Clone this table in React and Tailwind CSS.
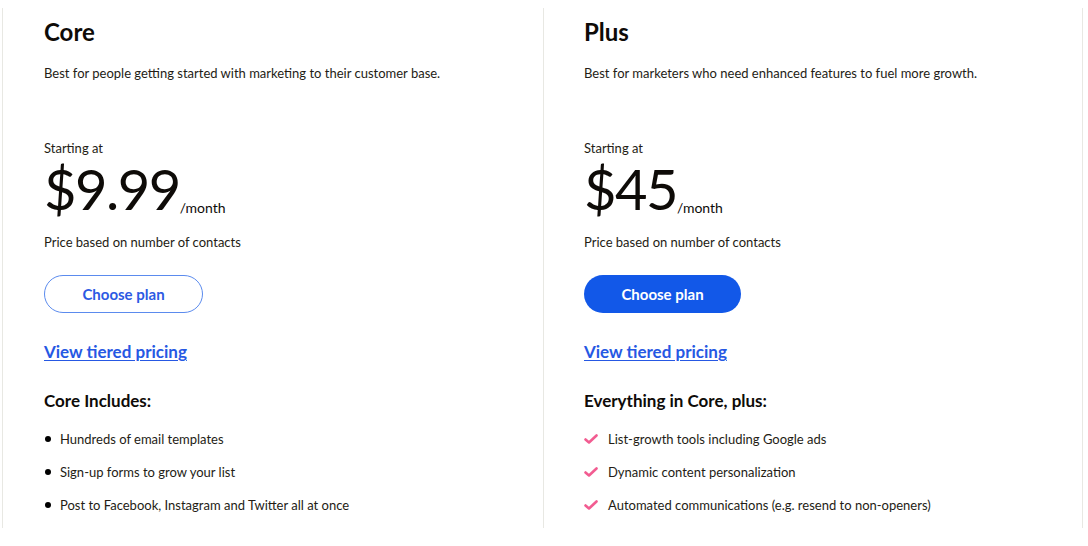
import React from 'react';

const font = { fontFamily: 'Lato, "Open Sans", sans-serif' };

const Check = () => (
    <svg width="14" height="11" viewBox="0 0 14 11" className="shrink-0">
        <polyline points="1.5,5.5 5,8.5 12.5,1.5" fill="none" stroke="#f25c91" strokeWidth="2.6" strokeLinecap="round" strokeLinejoin="round" />
    </svg>
);

const plans = [
    {
        name: 'Core',
        blurb: 'Best for people getting started with marketing to their customer base.',
        price: '$9.99',
        filled: false,
        heading: 'Core Includes:',
        check: false,
        items: [
            'Hundreds of email templates',
            'Sign-up forms to grow your list',
            'Post to Facebook, Instagram and Twitter all at once',
        ],
    },
    {
        name: 'Plus',
        blurb: 'Best for marketers who need enhanced features to fuel more growth.',
        price: '$45',
        filled: true,
        heading: 'Everything in Core, plus:',
        check: true,
        items: [
            'List-growth tools including Google ads',
            'Dynamic content personalization',
            'Automated communications (e.g. resend to non-openers)',
        ],
    },
];

const PlanColumn = ({ plan, className }) => (
    <div className={`flex flex-col h-[520px] pt-[9px] border-l border-[#e8e8e3] ${className}`}>
        <h2 className="text-[24px] leading-[30px] font-bold text-[#0e0b08]">{plan.name}</h2>
        <p className="mt-[18px] text-[13px] leading-[16px] text-[#241c15]">{plan.blurb}</p>

        <p className="mt-[59px] text-[13px] leading-[16px] text-[#241c15]">Starting at</p>
        <div className="mt-[5px] flex items-baseline text-[#0e0b08]">
            <span className="text-[56px] leading-[56px] font-normal tracking-[-1.5px]">{plan.price}</span>
            <span className="text-[14px] leading-[16px] relative top-[3px]">/month</span>
        </div>
        <p className="mt-[17px] text-[13px] leading-[16px] text-[#241c15]">Price based on number of contacts</p>

        {plan.filled ? (
            <button className="mt-[25px] w-[157px] h-[38px] rounded-full bg-[#1258e8] text-white text-[15px] font-bold">
                Choose plan
            </button>
        ) : (
            <button className="mt-[25px] w-[159px] h-[38px] rounded-full border border-[#5b8bee] text-[#2c5ae3] text-[15px] font-bold">
                Choose plan
            </button>
        )}

        <a href="#" className="mt-[29px] self-start text-[17px] leading-[20px] font-bold text-[#2658e3] underline underline-offset-2">
            View tiered pricing
        </a>

        <h3 className="mt-[29px] text-[17px] leading-[20px] font-bold text-[#0e0b08]">{plan.heading}</h3>

        <ul className="mt-[20px] flex flex-col gap-[17px]">
            {plan.items.map((item, i) => (
                <li key={i} className="flex items-center h-[16px] text-[13px] leading-[16px] text-[#241c15]">
                    {plan.check ? (
                        <span className="w-[24px] flex"><Check /></span>
                    ) : (
                        <span className="w-[16px] flex"><span className="w-[6px] h-[6px] rounded-full bg-black ml-[1px]" /></span>
                    )}
                    <span>{item}</span>
                </li>
            ))}
        </ul>
    </div>
);

export default function App() {
    return (
        <div className="w-[1088px] h-[546px] bg-white overflow-hidden" style={font}>
            <div className="ml-[2px] mt-[8px] flex">
                <PlanColumn plan={plans[0]} className="w-[541px] pl-[41px]" />
                <PlanColumn plan={plans[1]} className="w-[540px] pl-[40px] border-r" />
            </div>
        </div>
    );
}
